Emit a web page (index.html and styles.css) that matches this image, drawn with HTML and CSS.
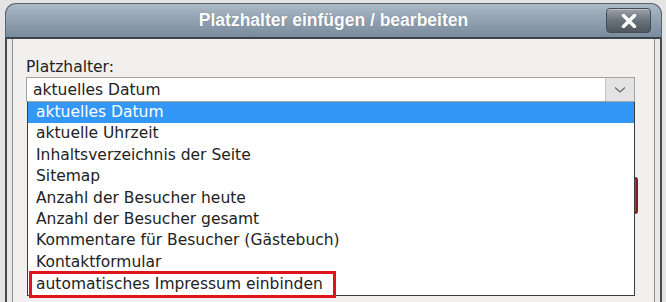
FILE: index.html
```html
<!DOCTYPE html>
<html lang="de">
<head>
<meta charset="utf-8">
<title>Platzhalter einfügen / bearbeiten</title>
<link rel="stylesheet" href="styles.css">
</head>
<body>
<div class="dialog">
  <div class="titlebar">
    <span></span>
    <h1 class="title">Platzhalter einfügen / bearbeiten</h1>
    <button class="close" type="button" aria-label="Schließen">
      <svg width="16" height="14" viewBox="0 0 16 14"><path d="M2.5 1.5 L13.5 12.5 M13.5 1.5 L2.5 12.5" stroke="#fff" stroke-width="3.4" stroke-linecap="round"/></svg>
    </button>
  </div>
  <div class="frame">
    <div class="panel">
      <div class="label">Platzhalter:</div>
      <div class="select">
        <span class="select-value">aktuelles Datum</span>
        <span class="select-arrow">
          <svg width="12" height="8" viewBox="0 0 12 8"><path d="M1 1.5 L6 6 L11 1.5" fill="none" stroke="#6b6b6b" stroke-width="1.3"/></svg>
        </span>
        <ul class="options">
          <li class="opt selected">aktuelles Datum</li>
          <li class="opt">aktuelle Uhrzeit</li>
          <li class="opt">Inhaltsverzeichnis der Seite</li>
          <li class="opt">Sitemap</li>
          <li class="opt">Anzahl der Besucher heute</li>
          <li class="opt">Anzahl der Besucher gesamt</li>
          <li class="opt">Kommentare für Besucher (Gästebuch)</li>
          <li class="opt">Kontaktformular</li>
          <li class="opt marked"><span class="mark">automatisches Impressum einbinden</span></li>
        </ul>
      </div>
      <div class="button-row"><span class="hidden-btn"></span></div>
    </div>
  </div>
</div>
<div class="page-below">r Webseite</div>
</body>
</html>
```
FILE: styles.css
```css
html, body {
  margin: 0;
  padding: 0;
}
body {
  width: 666px;
  height: 302px;
  overflow: hidden;
  background: #e4e4e4;
  font-family: "DejaVu Sans", Verdana, sans-serif;
  color: #222;
}
.dialog {
  margin: 3px 0 0 5px;
  width: 657px;
  position: relative;
  z-index: 2;
}
.titlebar {
  height: 33px;
  border: 1px solid #56636e;
  border-bottom: 2px solid #39444d;
  border-radius: 11px 11px 0 0;
  background: linear-gradient(#adb9c5 0%, #93a3b3 45%, #7a8b9c 100%);
  display: grid;
  grid-template-columns: 1fr auto 1fr;
  align-items: center;
}
.title {
  margin: 0;
  font-family: "Liberation Sans", Arial, sans-serif;
  font-weight: bold;
  font-size: 17.5px;
  color: #fff;
  text-shadow: 0 0 1px rgba(60,70,80,0.5);
}
.close {
  justify-self: end;
  margin-right: 10px;
  width: 45px;
  height: 25px;
  border: 1px solid #444d55;
  border-radius: 4px;
  background: linear-gradient(#9aa3ab 0%, #6a737b 50%, #4e575f 100%);
  box-shadow: inset 0 1px 0 rgba(255,255,255,0.35);
  display: flex;
  align-items: center;
  justify-content: center;
  padding: 0;
}
.frame {
  background: #e9e8e6;
  border-left: 2px solid #4b4b4b;
  border-right: 2px solid #4b4b4b;
  border-bottom: 2px solid #4b4b4b;
  padding: 0 5px 7px 5px;
}
.panel {
  background: #f1f0ee;
  border: 1px solid #8e8e8e;
  border-top: none;
  height: 247px;
  padding: 19px 19px 0 13px;
}
.label {
  font-size: 15.5px;
  line-height: 19px;
  height: 19px;
}
.select {
  position: relative;
  height: 23px;
  border: 1px solid #a4a4a4;
  background: #fff;
  display: flex;
  align-items: center;
}
.select-value {
  flex: 1;
  padding-left: 6px;
  font-size: 15.5px;
}
.select-arrow {
  width: 28px;
  height: 23px;
  background: #e3e3e3;
  border-left: 1px solid #c4c4c4;
  display: flex;
  align-items: center;
  justify-content: center;
}
.options {
  position: absolute;
  left: 0;
  right: -1px;
  top: 24px;
  margin: 0;
  padding: 0;
  list-style: none;
  background: #fff;
  border: 1px solid #3c3c3c;
  border-top: none;
  z-index: 3;
}
.opt {
  height: 21.4px;
  line-height: 21.4px;
  padding-left: 8px;
  font-size: 15.5px;
  white-space: nowrap;
}
.opt.selected {
  background: #3297f7;
  color: #fff;
}
.opt.marked {
  padding-left: 1px;
}
.mark {
  display: inline-block;
  border: 3px solid #e0141b;
  padding: 0 10px 0 4px;
  height: 21px;
  line-height: 21px;
  margin-top: -2px;
}
.button-row {
  display: flex;
  justify-content: flex-end;
  margin-top: 75px;
  margin-right: -3px;
}
.hidden-btn {
  width: 60px;
  height: 33px;
  border: 2px solid #7a1f1f;
  border-radius: 3px;
  background: #b33;
}
.page-below {
  margin: -11px 0 0 338px;
  font-family: "DejaVu Sans", sans-serif;
  font-size: 24px;
  line-height: 28px;
  color: #9a9a9a;
  position: relative;
  z-index: 1;
}
```
